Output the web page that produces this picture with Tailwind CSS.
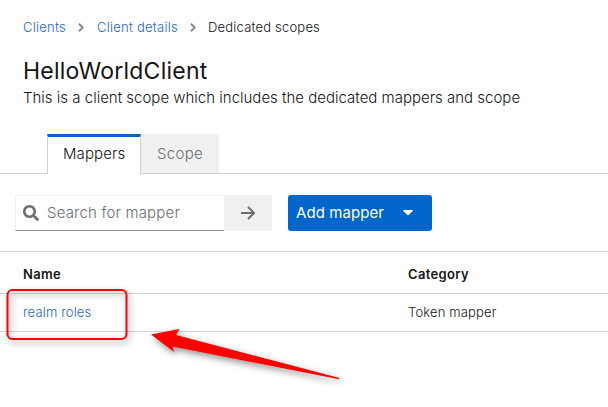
<!DOCTYPE html>
<html lang="en">
<head>
<meta charset="utf-8">
<title>Dedicated scopes</title>
<script src="https://cdn.jsdelivr.net/npm/@tailwindcss/browser@4"></script>
</head>
<body class="relative h-[407px] w-[608px] overflow-hidden bg-white font-['Inter','Open_Sans',sans-serif] font-light text-[#151515] whitespace-nowrap">
<nav class="flex h-[54px] items-center pt-[1px] pl-[23px] text-[13px] tracking-[0.25px]">
  <a class="w-[55px] text-[#1f66cc]">Clients</a>
  <svg class="mr-[13px] h-[9px] w-[6px]" viewBox="0 0 6 9" fill="none" stroke="#8a8d90" stroke-width="2"><path d="M1 .8 4.600 4.500 1 8.200"/></svg>
  <a class="w-[93px] text-[#1f66cc]">Client details</a>
  <svg class="mr-[12px] h-[9px] w-[6px]" viewBox="0 0 6 9" fill="none" stroke="#8a8d90" stroke-width="2"><path d="M1 .8 4.600 4.500 1 8.200"/></svg>
  <span class="tracking-[0.2px]">Dedicated scopes</span>
</nav>
<header class="h-[80px] pl-[23px]">
  <h1 class="h-[33px] text-[23px] leading-[35px] font-normal tracking-[0.24px]">HelloWorldClient</h1>
  <p class="text-[15px] leading-[22px]">This is a client scope which includes the dedicated mappers and scope</p>
</header>
<div class="flex h-[40px] text-[15px]">
  <div class="w-[47px] border-b border-[#d2d2d2]"></div>
  <div class="w-[94px] border-x border-t-[3px] border-x-[#d2d2d2] border-t-[#0066cc] pl-[15px] leading-[34px] tracking-[0.1px]">Mappers</div>
  <div class="w-[78px] border-b border-[#d2d2d2] bg-[#f0f0f0] pl-[16px] leading-[40px] tracking-[0.3px] text-[#6a6e73]">Scope</div>
  <div class="flex-1 border-b border-[#d2d2d2]"></div>
</div>
<div class="flex h-[77px] pt-[21px] pl-[15px] text-[15px]">
  <div class="flex h-[36px] w-[209px] items-center border border-r-0 border-[#f0f0f0] border-b-[#8a8d90] pl-[7px] text-[#6a6e73]">
    <svg class="mr-[8px] h-[16px] w-[16px]" viewBox="0 0 512 512" fill="#6a6e73"><path d="M505 442.700 405.300 343c-4.500-4.500-10.600-7-17-7H372c27.600-35.300 44-79.700 44-128C416 93.100 322.900 0 208 0S0 93.100 0 208s93.100 208 208 208c48.300 0 92.700-16.400 128-44v16.300c0 6.400 2.500 12.500 7 17l99.700 99.700c9.400 9.400 24.600 9.400 33.900 0l28.300-28.300c9.400-9.400 9.400-24.600.1-34zM208 336c-70.700 0-128-57.200-128-128 0-70.700 57.200-128 128-128 70.700 0 128 57.200 128 128 0 70.700-57.200 128-128 128z"/></svg>
    <span class="tracking-[0.18px]">Search for mapper</span>
  </div>
  <div class="flex h-[36px] w-[48px] items-center justify-center bg-[#f0f0f0]">
    <svg class="h-[14px] w-[14px]" viewBox="0 0 14 14" fill="none" stroke="#6a6e73" stroke-width="2"><path d="M0 7h12.500M7 1l6 6-6 6"/></svg>
  </div>
  <div class="ml-[16px] flex h-[36px] w-[144px] items-center rounded-[3px] bg-[#0066cc] pl-[8px] font-normal text-white">
    <span class="w-[107px] tracking-[0.08px]">Add mapper</span>
    <svg class="h-[6px] w-[10px]" viewBox="0 0 10 6" fill="#fff"><path d="M.7 0h8.600q1 .4.200 1.200L5.700 5q-.7.600-1.400 0L.5 1.200Q-.3.400.7 0z"/></svg>
  </div>
</div>
<div class="grid h-[42px] grid-cols-[385px_1fr] border-t border-[#d2d2d2] pl-[23px] text-[13px] leading-[45px] font-semibold"><span class="tracking-[0.3px]">Name</span><span class="tracking-[0.35px]">Category</span></div>
<div class="grid h-[39px] grid-cols-[385px_1fr] border-y border-[#d2d2d2] pl-[23px] text-[13px] leading-[37px] tracking-[0.15px]"><a class="text-[#1f66cc]">realm roles</a><span>Token mapper</span></div>
<svg class="absolute top-0 left-0 h-[407px] w-[608px]" viewBox="0 0 608 407">
  <defs><filter id="shadow" x="-20%" y="-30%" width="150%" height="180%"><feDropShadow dx="2" dy="3" stdDeviation="3.500" flood-color="#000" flood-opacity=".45"/></filter></defs>
  <g filter="url(#shadow)">
    <rect x="7.500" y="290" width="119" height="49" rx="5" fill="none" stroke="#f00" stroke-width="2"/>
    <path fill="#f00" d="M151 334.500 179.500 329 176 335 339.500 378 339 379.300 172.500 346.500 174 352z"/>
  </g>
</svg>
</body>
</html>
